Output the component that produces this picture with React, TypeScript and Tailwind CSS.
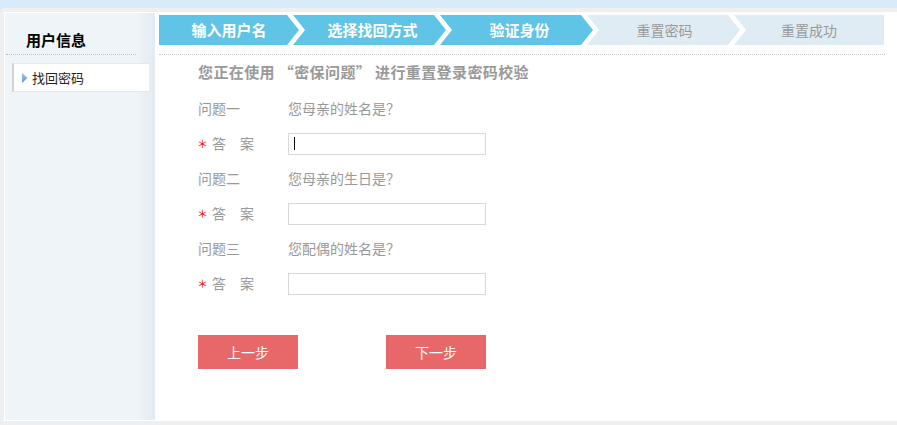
const FONT = "font-['Noto_Sans_CJK_SC','Noto_Sans',sans-serif]";

function Steps() {
  return (
    <div className="flex h-[30px] w-[725px]">
      <div className="flex w-[140px] shrink-0 items-center justify-center bg-[#5fc4e6] text-[15px] font-bold leading-[20px] text-white [clip-path:polygon(0_0,calc(100%_-_12px)_0,100%_50%,calc(100%_-_12px)_100%,0_100%)]">
        输入用户名
      </div>
      <div className="ml-[-6px] flex w-[153px] shrink-0 items-center justify-center bg-[#5fc4e6] pl-[12px] pr-[6px] text-[15px] font-bold leading-[20px] text-white [clip-path:polygon(0_0,calc(100%_-_12px)_0,100%_50%,calc(100%_-_12px)_100%,0_100%,12px_50%)]">
        选择找回方式
      </div>
      <div className="ml-[-6px] flex w-[153px] shrink-0 items-center justify-center bg-[#5fc4e6] pl-[12px] pr-[6px] text-[15px] font-bold leading-[20px] text-white [clip-path:polygon(0_0,calc(100%_-_12px)_0,100%_50%,calc(100%_-_12px)_100%,0_100%,12px_50%)]">
        验证身份
      </div>
      <div className="ml-[-6px] flex w-[153px] shrink-0 items-center justify-center bg-[#e0ecf3] pl-[12px] pr-[10px] text-[14px] leading-[20px] text-[#999] [clip-path:polygon(0_0,calc(100%_-_12px)_0,100%_50%,calc(100%_-_12px)_100%,0_100%,12px_50%)]">
        重置密码
      </div>
      <div className="ml-[-6px] flex w-[150px] shrink-0 items-center justify-center bg-[#e0ecf3] pl-[12px] pr-[12px] text-[14px] leading-[20px] text-[#999] [clip-path:polygon(0_0,100%_0,100%_100%,0_100%,12px_50%)]">
        重置成功
      </div>
    </div>
  );
}

function QuestionRow({ label, question }: { label: string; question: string }) {
  return (
    <div className="flex h-[35px] items-center text-[14px] leading-[20px] text-[#999]">
      <span className="w-[90px]">{label}</span>
      <span>{question}</span>
    </div>
  );
}

function AnswerRow({ caret }: { caret?: boolean }) {
  return (
    <div className="flex h-[35px] items-center">
      <div className="flex w-[90px] items-center">
        <span className="-ml-[1px] w-[15px] text-[11px] leading-[20px] text-[#f00]">＊</span>
        <span className="text-[14px] leading-[20px] text-[#999]">答　案</span>
      </div>
      <div className="relative h-[22px] w-[198px]">
        <input
          readOnly
          className="h-[22px] w-[198px] border border-[#d8d8d8] bg-white outline-none"
        />
        {caret && <span className="absolute left-[6px] top-[5px] h-[13px] w-[1px] bg-black" />}
      </div>
    </div>
  );
}

export default function App() {
  return (
    <div className={`${FONT} h-[425px] w-full overflow-hidden bg-[#d7ebfb] pt-[8px]`}>
      <div className="h-[417px] rounded-tl-[5px] border-[4px] border-r-0 border-[#efefef]">
        <div className="flex h-full border-y border-l border-white">
          {/* Sidebar */}
          <div className="flex w-[150px] shrink-0 flex-col bg-[linear-gradient(to_right,#eef4f8_88%,#e3ebf1)]">
            <div className="ml-[1px] w-[130px] border-b border-dotted border-[#bbb] pb-[4px] pl-[20px] pt-[17px] text-[15px] font-bold leading-[20px] text-black">
              用户信息
            </div>
            <div className="ml-[7px] mt-[8px] flex h-[29px] w-[137px] items-center border-y border-l-2 border-y-[#e3e9ed] border-l-[#cfd3d6] bg-white pl-[8px]">
              <svg width="6" height="10" viewBox="0 0 6 10" className="shrink-0">
                <defs>
                  <linearGradient id="tri" x1="0" y1="0" x2="0" y2="1">
                    <stop offset="0" stopColor="#9cc6ea" />
                    <stop offset="1" stopColor="#5d98d2" />
                  </linearGradient>
                </defs>
                <path d="M0 0 L5.5 5 L0 10 Z" fill="url(#tri)" />
              </svg>
              <span className="ml-[4px] text-[13px] leading-[18px] text-[#222]">找回密码</span>
            </div>
          </div>

          {/* Main */}
          <div className="flex-1 bg-white pl-[4px] pt-[2px]">
            <div className="w-[726px] border-b border-dotted border-[#c8c8c8] pb-[9px]">
              <Steps />
            </div>
            <div className="ml-[39px]">
              <div className="flex h-[35px] items-center pb-[2px] text-[15px] font-bold leading-[20px] tracking-[0.4px] text-[#999]">
                您正在使用 “密保问题” 进行重置登录密码校验
              </div>
              <QuestionRow label="问题一" question="您母亲的姓名是？" />
              <AnswerRow caret />
              <QuestionRow label="问题二" question="您母亲的生日是？" />
              <AnswerRow />
              <QuestionRow label="问题三" question="您配偶的姓名是？" />
              <AnswerRow />
              <div className="mt-[35px] flex gap-[88px]">
                <button className="h-[34px] w-[100px] bg-[#e8686a] text-[14px] leading-[20px] text-white">
                  上一步
                </button>
                <button className="h-[34px] w-[100px] bg-[#e8686a] text-[14px] leading-[20px] text-white">
                  下一步
                </button>
              </div>
            </div>
          </div>
        </div>
      </div>
    </div>
  );
}
